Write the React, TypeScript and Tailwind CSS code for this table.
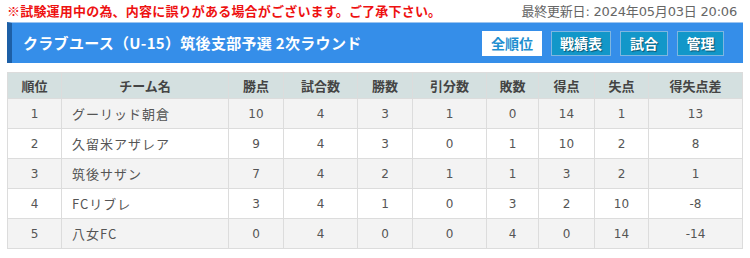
const rows = [
  { rank: 1, team: 'グーリッド朝倉', pts: 10, played: 4, win: 3, draw: 1, lose: 0, gf: 14, ga: 1, gd: 13 },
  { rank: 2, team: '久留米アザレア', pts: 9, played: 4, win: 3, draw: 0, lose: 1, gf: 10, ga: 2, gd: 8 },
  { rank: 3, team: '筑後サザン', pts: 7, played: 4, win: 2, draw: 1, lose: 1, gf: 3, ga: 2, gd: 1 },
  { rank: 4, team: 'FCリブレ', pts: 3, played: 4, win: 1, draw: 0, lose: 3, gf: 2, ga: 10, gd: -8 },
  { rank: 5, team: '八女FC', pts: 0, played: 4, win: 0, draw: 0, lose: 4, gf: 0, ga: 14, gd: -14 },
];

const heads = [
  { label: '順位', w: 'w-[54px]' },
  { label: 'チーム名', w: 'w-[167px]' },
  { label: '勝点', w: 'w-[55px]' },
  { label: '試合数', w: 'w-[74px]' },
  { label: '勝数', w: 'w-[55px]' },
  { label: '引分数', w: 'w-[74px]' },
  { label: '敗数', w: 'w-[52px]' },
  { label: '得点', w: 'w-[56px]' },
  { label: '失点', w: 'w-[54px]' },
  { label: '得失点差', w: 'w-[94px]' },
];

const NavButton = ({ label, w, active }: { label: string; w: string; active?: boolean }) => (
  <button
    className={
      active
        ? `${w} h-[25px] bg-white text-[#1f8fd0] text-[14px] font-bold border border-white`
        : `${w} h-[25px] bg-[#1297c9] text-white text-[14px] font-bold border border-[#7fb6e0] [text-shadow:1px_1px_1px_rgba(0,0,0,0.45)]`
    }
  >
    {label}
  </button>
);

export default function App() {
  const cell = 'border border-[#dcdcdc] h-[30px] text-center';
  return (
    <div className="w-[750px] h-[258px] bg-white font-['Noto_Sans_CJK_JP',sans-serif] overflow-hidden">
      <div className="flex items-center justify-between h-[22px] pl-[7px] pr-[13px]">
        <p className="text-[13px] font-bold text-[#ee1111] tracking-[0.2px]">
          ※試験運用中の為、内容に誤りがある場合がございます。ご了承下さい。
        </p>
        <p className="text-[13px] text-[#666] font-['DejaVu_Sans','Noto_Sans_CJK_JP',sans-serif] tracking-[-0.2px]">
          <span className="font-['Noto_Sans_CJK_JP',sans-serif]">最終更新日</span>: 2024<span className="font-['Noto_Sans_CJK_JP',sans-serif]">年</span>05<span className="font-['Noto_Sans_CJK_JP',sans-serif]">月</span>03<span className="font-['Noto_Sans_CJK_JP',sans-serif]">日</span> 20:06
        </p>
      </div>

      <div className="mx-[7px] w-[736px] h-[41px] flex items-center justify-between bg-[#358ee9] border-l-[5px] border-l-[#1d5fa6] border-t border-t-[#9cc4ef] pl-[11px] pr-[19px]">
        <h1 className="text-white text-[15px] font-bold tracking-[0.3px]">クラブユース（U-15）筑後支部予選 2次ラウンド</h1>
        <div className="flex gap-[9px] mt-[1px]">
          <NavButton label="全順位" w="w-[60px]" active />
          <NavButton label="戦績表" w="w-[60px]" />
          <NavButton label="試合" w="w-[48px]" />
          <NavButton label="管理" w="w-[47px]" />
        </div>
      </div>

      <table className="mt-[9px] ml-[7px] w-[735px] border-collapse table-fixed">
        <thead>
          <tr className="bg-[#d4e0e0]">
            {heads.map((h) => (
              <th key={h.label} className={`${h.w} border border-[#dcdcdc] h-[26px] text-[13px] font-bold text-[#444] text-center`}>
                {h.label}
              </th>
            ))}
          </tr>
        </thead>
        <tbody className="text-[13px] text-[#555]">
          {rows.map((r, i) => (
            <tr key={r.rank} className={i % 2 === 0 ? 'bg-[#f3f3f3]' : 'bg-white'}>
              <td className={`${cell} font-['DejaVu_Sans',sans-serif] text-[12px]`}>{r.rank}</td>
              <td className={`${cell} text-left pl-[10px] tracking-[1px]`}>{r.team}</td>
              {[r.pts, r.played, r.win, r.draw, r.lose, r.gf, r.ga, r.gd].map((v, j) => (
                <td key={j} className={`${cell} font-['DejaVu_Sans',sans-serif] text-[12px]`}>{v}</td>
              ))}
            </tr>
          ))}
        </tbody>
      </table>
    </div>
  );
}
